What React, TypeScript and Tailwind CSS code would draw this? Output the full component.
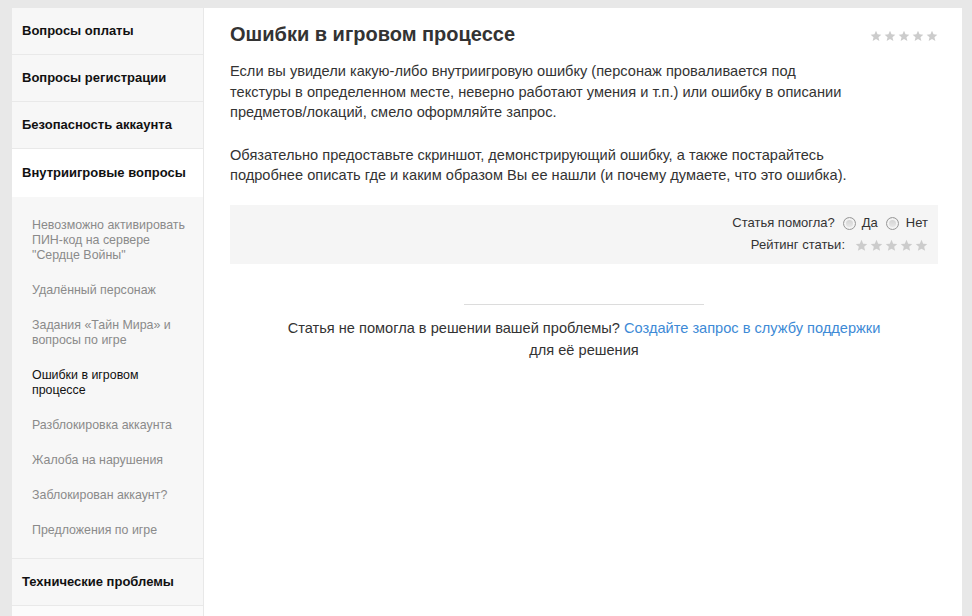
const topics = [
  "Вопросы оплаты",
  "Вопросы регистрации",
  "Безопасность аккаунта",
];

const subTopics = [
  { label: 'Невозможно активировать ПИН-код на сервере "Сердце Войны"', active: false },
  { label: "Удалённый персонаж", active: false },
  { label: "Задания «Тайн Мира» и вопросы по игре", active: false },
  { label: "Ошибки в игровом процессе", active: true },
  { label: "Разблокировка аккаунта", active: false },
  { label: "Жалоба на нарушения", active: false },
  { label: "Заблокирован аккаунт?", active: false },
  { label: "Предложения по игре", active: false },
];

function Stars({ size = 12 }: { size?: number }) {
  return (
    <span className="inline-flex gap-[2px]">
      {[0, 1, 2, 3, 4].map((i) => (
        <svg key={i} width={size} height={size} viewBox="0 0 24 24">
          <path
            d="M12 1.5l3.1 7.1 7.6.7-5.8 5 1.8 7.5L12 17.8l-6.7 4 1.8-7.5-5.8-5 7.6-.7z"
            fill="#cccccc"
          />
        </svg>
      ))}
    </span>
  );
}

function Radio() {
  return (
    <span className="inline-block h-[13px] w-[13px] rounded-full border border-[#999] bg-gradient-to-b from-[#cfcfcf] to-[#ececec] shadow-[inset_0_0_0_2px_#f3f3f3]" />
  );
}

export default function App() {
  return (
    <div
      className="flex h-[616px] w-[972px] overflow-hidden bg-[#e8e8e8] pt-[8px] pl-[12px] text-[#333]"
      style={{ fontFamily: '"Liberation Sans", Arial, sans-serif' }}
    >
      <aside className="flex w-[191px] shrink-0 flex-col bg-[#f7f7f7]">
        {topics.map((t) => (
          <div
            key={t}
            className="flex h-[47px] items-center border-b border-[#e9e9e9] px-[10px] text-[13px] font-bold text-[#111]"
          >
            {t}
          </div>
        ))}
        <div className="flex h-[48px] items-center bg-white px-[10px] text-[13px] font-bold text-[#111]">
          Внутриигровые вопросы
        </div>
        <div className="flex flex-col gap-[20px] border-b border-[#e9e9e9] pt-[21px] pb-[20px] pl-[20px]">
          {subTopics.map((s) => (
            <div
              key={s.label}
              className={
                s.active
                  ? "w-[158px] text-[12.4px] leading-[15px] text-[#111]"
                  : "w-[158px] text-[12.4px] leading-[15px] text-[#8a8a8a]"
              }
            >
              {s.label}
            </div>
          ))}
        </div>
        <div className="flex h-[47px] items-center border-b border-[#e9e9e9] px-[10px] text-[13px] font-bold text-[#111]">
          Технические проблемы
        </div>
        <div className="flex-1 bg-[#fbfbfb]" />
      </aside>

      <main className="ml-px w-[758px] shrink-0 bg-white pl-[26px] pr-[24px] pt-[13px]">
        <div className="flex items-start justify-between">
          <h1 className="text-[20px] font-bold leading-[26px] text-[#333]">
            Ошибки в игровом процессе
          </h1>
          <div className="pt-[4px]">
            <Stars />
          </div>
        </div>
        <p className="mt-[12px] text-[14.6px] leading-[20.5px] text-[#333]">
          Если вы увидели какую-либо внутриигровую ошибку (персонаж проваливается под
          <br />
          текстуры в определенном месте, неверно работают умения и т.п.) или ошибку в описании
          <br />
          предметов/локаций, смело оформляйте запрос.
        </p>
        <p className="mt-[22px] text-[14.6px] leading-[20.5px] text-[#333]">
          Обязательно предоставьте скриншот, демонстрирующий ошибку, а также постарайтесь
          <br />
          подробнее описать где и каким образом Вы ее нашли (и почему думаете, что это ошибка).
        </p>

        <div className="mt-[19px] flex h-[59px] flex-col items-end justify-center gap-[6px] bg-[#f5f5f5] pr-[10px] text-[13px] leading-[16px] text-[#333]">
          <div className="flex items-center">
            <span>Статья помогла?</span>
            <span className="ml-[8px] flex">
              <Radio />
            </span>
            <span className="ml-[6px]">Да</span>
            <span className="ml-[8px] flex">
              <Radio />
            </span>
            <span className="ml-[7px]">Нет</span>
          </div>
          <div className="flex items-center gap-[10px]">
            <span>Рейтинг статьи:</span>
            <Stars size={13} />
          </div>
        </div>

        <div className="mx-auto mt-[40px] h-px w-[240px] bg-[#dcdcdc]" />
        <p className="mt-[12px] text-center text-[14.6px] leading-[22px] text-[#333]">
          Статья не помогла в решении вашей проблемы?{" "}
          <a href="#" className="text-[#3d8ad6]">
            Создайте запрос в службу поддержки
          </a>
          <br />
          для её решения
        </p>
      </main>
    </div>
  );
}
